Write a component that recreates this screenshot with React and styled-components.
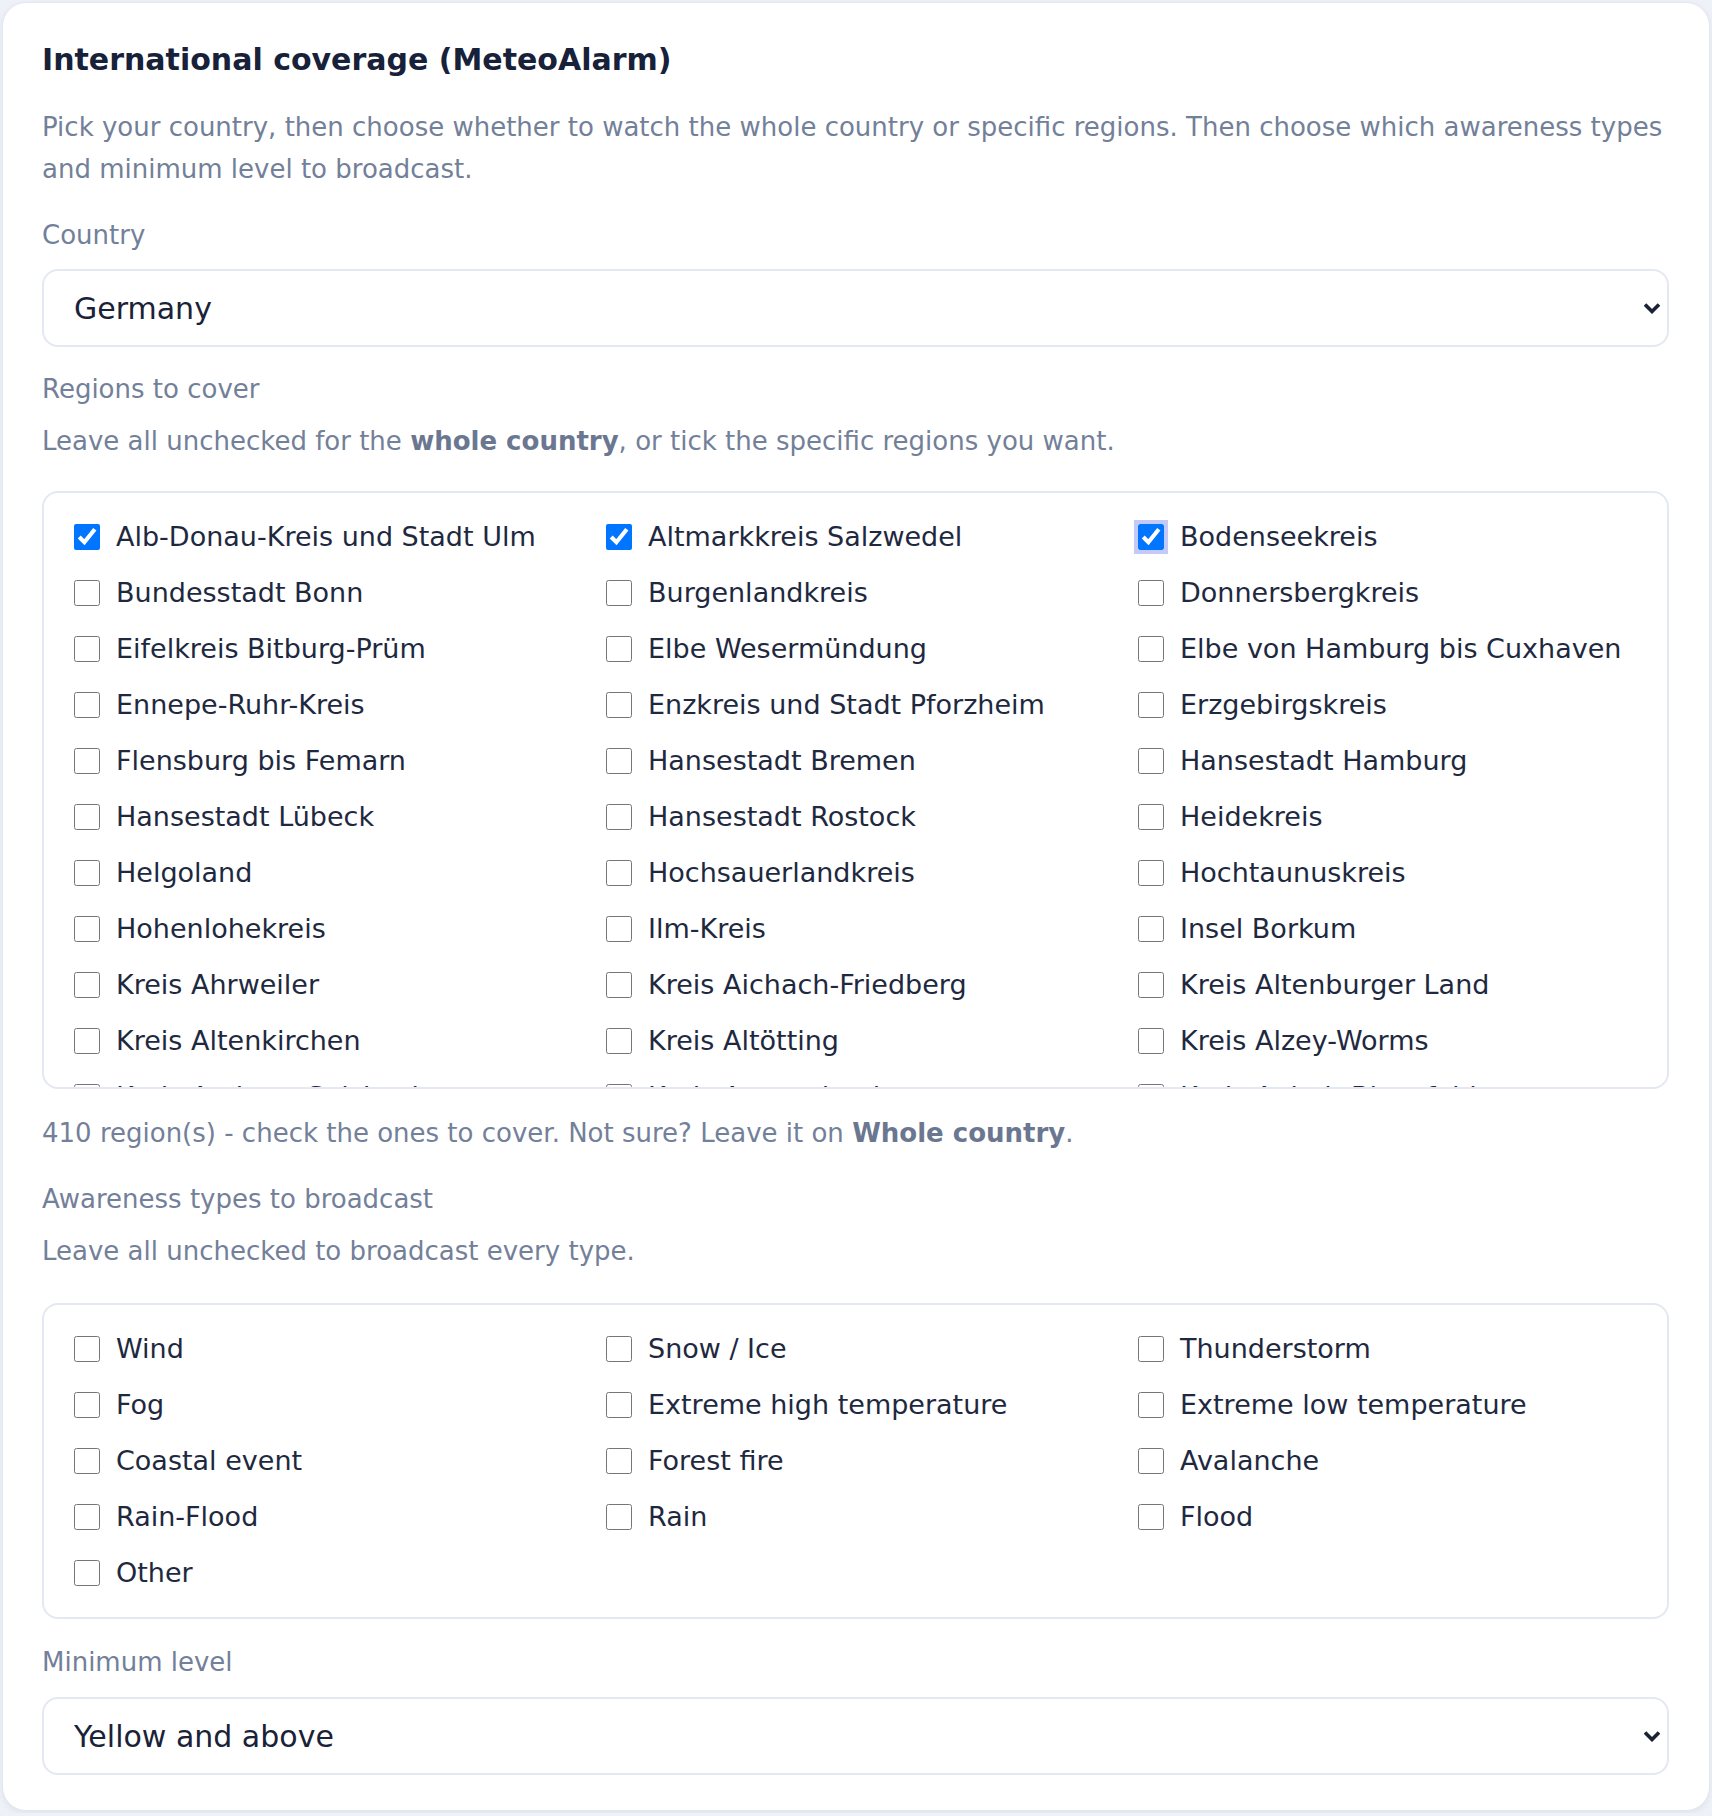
import React from "react";
import styled, { createGlobalStyle } from "styled-components";

const GlobalStyle = createGlobalStyle`
  html, body { margin: 0; }
  body {
    background: #eef1f7;
    padding: 2px;
    font-family: "DejaVu Sans", "Noto Sans", sans-serif;
    -webkit-font-smoothing: antialiased;
  }
  * { box-sizing: border-box; }
`;

const Card = styled.section`
  background: #ffffff;
  border: 1px solid #e3e7f0;
  border-radius: 24px;
  padding: 37px 40px 35px 39px;
  box-shadow: 0 2px 6px rgba(30, 41, 80, 0.07);
`;

const Title = styled.h3`
  margin: 0;
  font-size: 30px;
  line-height: 39px;
  font-weight: 700;
  color: #18213a;
`;

const Intro = styled.p`
  margin: 27px 0 0;
  font-size: 26px;
  line-height: 42px;
  color: #738099;
`;

const FieldLabel = styled.div`
  margin-top: ${(p) => p.$mt}px;
  font-size: 26px;
  line-height: 38px;
  color: #738099;
`;

const Hint = styled.p`
  margin: ${(p) => p.$mt}px 0 0;
  font-size: 26px;
  line-height: 38px;
  color: #738099;

  strong {
    font-weight: 700;
    color: #6b7790;
  }
`;

const SelectWrap = styled.div`
  position: relative;
  margin-top: ${(p) => p.$mt}px;
`;

const Select = styled.select`
  display: block;
  width: 100%;
  height: 78px;
  appearance: none;
  -webkit-appearance: none;
  background: #ffffff;
  border: 2px solid #e4e8f2;
  border-radius: 16px;
  padding: 0 60px 0 30px;
  font-family: "DejaVu Sans", sans-serif;
  font-size: 30px;
  color: #1a2238;
  outline: none;
`;

const Chevron = styled.svg`
  position: absolute;
  right: 8px;
  top: 50%;
  width: 18px;
  height: 12px;
  transform: translateY(-50%);
  pointer-events: none;
`;

const CheckGrid = styled.div`
  margin-top: ${(p) => p.$mt}px;
  border: 2px solid #e4e8f2;
  border-radius: 16px;
  padding: 24px 29px 24px 30px;
  display: grid;
  grid-template-columns: repeat(3, 1fr);
  column-gap: 32px;
  row-gap: 16px;
  align-content: start;
  ${(p) => (p.$height ? `height: ${p.$height}px; overflow-y: auto;` : "")}
  scrollbar-width: none;
  &::-webkit-scrollbar { display: none; }
`;

const CheckItem = styled.label`
  display: flex;
  align-items: center;
  gap: 16px;
  min-height: 40px;
  font-size: 27px;
  line-height: 40px;
  color: #1e2940;
  white-space: nowrap;
`;

const Box = styled.input.attrs({ type: "checkbox" })`
  flex: none;
  width: 26px;
  height: 26px;
  margin: 0;
  ${(p) => (p.$focused ? "outline: 4px solid #c3caf7; outline-offset: 0;" : "")}
`;

const regions = [
  "Alb-Donau-Kreis und Stadt Ulm",
  "Altmarkkreis Salzwedel",
  "Bodenseekreis",
  "Bundesstadt Bonn",
  "Burgenlandkreis",
  "Donnersbergkreis",
  "Eifelkreis Bitburg-Prüm",
  "Elbe Wesermündung",
  "Elbe von Hamburg bis Cuxhaven",
  "Ennepe-Ruhr-Kreis",
  "Enzkreis und Stadt Pforzheim",
  "Erzgebirgskreis",
  "Flensburg bis Femarn",
  "Hansestadt Bremen",
  "Hansestadt Hamburg",
  "Hansestadt Lübeck",
  "Hansestadt Rostock",
  "Heidekreis",
  "Helgoland",
  "Hochsauerlandkreis",
  "Hochtaunuskreis",
  "Hohenlohekreis",
  "Ilm-Kreis",
  "Insel Borkum",
  "Kreis Ahrweiler",
  "Kreis Aichach-Friedberg",
  "Kreis Altenburger Land",
  "Kreis Altenkirchen",
  "Kreis Altötting",
  "Kreis Alzey-Worms",
  "Kreis Amberg-Sulzbach",
  "Kreis Ammerland",
  "Kreis Anhalt-Bitterfeld",
  "Kreis Ansbach",
  "Kreis Aschaffenburg",
  "Kreis Augsburg",
  "Kreis Aurich",
  "Kreis Bad Dürkheim",
  "Kreis Bad Kissingen",
];

const checkedRegions = new Set([
  "Alb-Donau-Kreis und Stadt Ulm",
  "Altmarkkreis Salzwedel",
  "Bodenseekreis",
]);

const types = [
  "Wind",
  "Snow / Ice",
  "Thunderstorm",
  "Fog",
  "Extreme high temperature",
  "Extreme low temperature",
  "Coastal event",
  "Forest fire",
  "Avalanche",
  "Rain-Flood",
  "Rain",
  "Flood",
  "Other",
];

function ChevronIcon() {
  return (
    <Chevron viewBox="0 0 18 12" aria-hidden="true">
      <path d="M2 2.5 L9 9.5 L16 2.5" fill="none" stroke="#1a2238" strokeWidth="3.6" strokeLinecap="butt" strokeLinejoin="miter" />
    </Chevron>
  );
}

export default function App() {
  return (
    <>
      <GlobalStyle />
      <Card>
        <Title>International coverage (MeteoAlarm)</Title>
        <Intro>
          Pick your country, then choose whether to watch the whole country or specific regions. Then choose which
          awareness types and minimum level to broadcast.
        </Intro>

        <FieldLabel $mt={26}>Country</FieldLabel>
        <SelectWrap $mt={15}>
          <Select defaultValue="DE">
            <option value="DE">Germany</option>
            <option value="AT">Austria</option>
            <option value="FR">France</option>
          </Select>
          <ChevronIcon />
        </SelectWrap>

        <FieldLabel $mt={23}>Regions to cover</FieldLabel>
        <Hint $mt={14}>
          Leave all unchecked for the <strong>whole country</strong>, or tick the specific regions you want.
        </Hint>
        <CheckGrid $mt={31} $height={598}>
          {regions.map((r) => (
            <CheckItem key={r}>
              <Box defaultChecked={checkedRegions.has(r)} $focused={r === "Bodenseekreis"} />
              {r}
            </CheckItem>
          ))}
        </CheckGrid>
        <Hint $mt={25}>
          410 region(s) - check the ones to cover. Not sure? Leave it on <strong>Whole country</strong>.
        </Hint>

        <FieldLabel $mt={28}>Awareness types to broadcast</FieldLabel>
        <Hint $mt={14}>Leave all unchecked to broadcast every type.</Hint>
        <CheckGrid $mt={33}>
          {types.map((t) => (
            <CheckItem key={t}>
              <Box />
              {t}
            </CheckItem>
          ))}
        </CheckGrid>

        <FieldLabel $mt={24}>Minimum level</FieldLabel>
        <SelectWrap $mt={16}>
          <Select defaultValue="yellow">
            <option value="yellow">Yellow and above</option>
            <option value="orange">Orange and above</option>
            <option value="red">Red only</option>
          </Select>
          <ChevronIcon />
        </SelectWrap>
      </Card>
    </>
  );
}
